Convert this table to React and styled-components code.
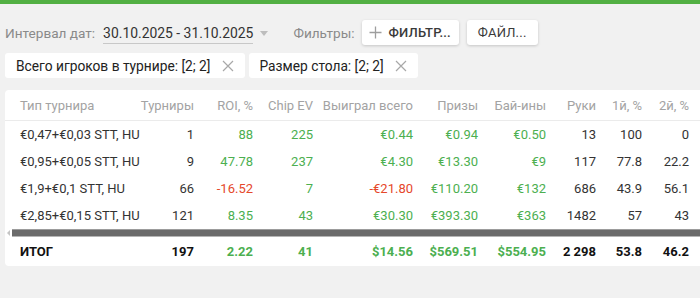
import React from "react";
import styled, { createGlobalStyle } from "styled-components";

const Global = createGlobalStyle`
  html, body { margin: 0; padding: 0; background: #f1f1f1; overflow: hidden; }
  body { font-family: Roboto, "Noto Sans", sans-serif; width: 700px; height: 298px; }
`;

const GREEN = "#4caf50";
const RED = "#e5482b";

const TopBar = styled.div`
  height: 4px;
  background: #52b043;
`;

const Content = styled.div`
  padding: 16px 0 0 5px;
  display: flex;
  flex-direction: column;
`;

const Toolbar = styled.div`
  display: flex;
  align-items: center;
  height: 25px;
`;

const Label = styled.span`
  font-size: 13.6px;
  color: #8a8a8a;
  margin-right: ${(p) => p.$mr || 8}px;
`;

const DateValue = styled.span`
  font-size: 13.9px;
  color: #333;
  border-bottom: 1px solid #c8c8c8;
  line-height: 18px;
  padding-bottom: 1px;
  margin-top: 2px;
`;

const Caret = styled.span`
  width: 0;
  height: 0;
  border-left: 4.5px solid transparent;
  border-right: 4.5px solid transparent;
  border-top: 5px solid #bdbdbd;
  margin: 1px 25px 0 7px;
`;

const Button = styled.button`
  height: 25px;
  display: flex;
  align-items: center;
  gap: 7px;
  padding: 0 ${(p) => (p.$icon ? 8 : 11)}px 0 ${(p) => (p.$icon ? 7 : 11)}px;
  background: #fff;
  border: none;
  border-radius: 3px;
  box-shadow: 0 1px 3px rgba(0, 0, 0, 0.18);
  font-family: Roboto, sans-serif;
  font-size: 13px;
  font-weight: ${(p) => (p.$bold ? 500 : 400)};
  color: #3a3a3a;
  letter-spacing: 0.2px;
  margin-right: 8px;
`;

const Chips = styled.div`
  display: flex;
  gap: 4px;
  margin-top: 8px;
`;

const Chip = styled.div`
  height: 25px;
  display: flex;
  align-items: center;
  gap: 11px;
  padding: 0 11px;
  background: #fff;
  border-radius: 3px;
  font-size: 13.75px;
  color: #222;
`;

const Card = styled.div`
  margin-top: 12px;
  width: 695px;
  overflow: hidden;
  background: #fff;
  border-radius: 4px 0 0 4px;
`;

const COLS = "135px 54px 59px 60px 100px 65px 68px 50px 46px 47px 56px";

const Row = styled.div`
  display: grid;
  grid-template-columns: ${COLS};
  align-items: center;
  height: ${(p) => p.$h || 27}px;
  ${(p) => p.$head && "border-bottom: 1px solid #ebebeb;"}
  font-size: 13px;
  font-weight: ${(p) => (p.$total ? 700 : 400)};
`;

const Cell = styled.div`
  text-align: ${(p) => (p.$left ? "left" : "right")};
  padding-left: ${(p) => (p.$left ? 15 : 0)}px;
  white-space: nowrap;
  color: ${(p) =>
    p.$head ? "#a3a3a3" : p.$c === "g" ? GREEN : p.$c === "r" ? RED : p.$total ? "#111" : "#333"};
`;

const Scroll = styled.div`
  display: flex;
  align-items: center;
  height: 8px;
  padding-left: 2px;
`;

const ScrollArrow = styled.span`
  width: 0;
  height: 0;
  border-top: 3px solid transparent;
  border-bottom: 3px solid transparent;
  border-right: 3px solid #c4c4c4;
  margin-right: 2px;
`;

const ScrollThumb = styled.div`
  flex: 1;
  height: 6px;
  background: #6b6b6b;
  border-top: 1px solid #9c9c9c;
  border-bottom: 1px solid #b5b5b5;
`;

const PlusIcon = () => (
  <svg width="13" height="13" viewBox="0 0 13 13">
    <path d="M6.5 0.5v12M0.5 6.5h12" stroke="#9e9e9e" strokeWidth="1.3" />
  </svg>
);

const CloseIcon = () => (
  <svg width="12" height="12" viewBox="0 0 12 12">
    <path d="M1 1l10 10M11 1L1 11" stroke="#a8a8a8" strokeWidth="1.2" />
  </svg>
);

const headers = ["Тип турнира", "Турниры", "ROI, %", "Chip EV", "Выиграл всего", "Призы", "Бай-ины", "Руки", "1й, %", "2й, %", ""];

const rows = [
  [["€0,47+€0,03 STT, HU"], ["1"], ["88", "g"], ["225", "g"], ["€0.44", "g"], ["€0.94", "g"], ["€0.50", "g"], ["13"], ["100"], ["0"]],
  [["€0,95+€0,05 STT, HU"], ["9"], ["47.78", "g"], ["237", "g"], ["€4.30", "g"], ["€13.30", "g"], ["€9", "g"], ["117"], ["77.8"], ["22.2"]],
  [["€1,9+€0,1 STT, HU"], ["66"], ["-16.52", "r"], ["7", "g"], ["-€21.80", "r"], ["€110.20", "g"], ["€132", "g"], ["686"], ["43.9"], ["56.1"]],
  [["€2,85+€0,15 STT, HU"], ["121"], ["8.35", "g"], ["43", "g"], ["€30.30", "g"], ["€393.30", "g"], ["€363", "g"], ["1482"], ["57"], ["43"]],
];

const total = [["ИТОГ"], ["197"], ["2.22", "g"], ["41", "g"], ["$14.56", "g"], ["$569.51", "g"], ["$554.95", "g"], ["2 298"], ["53.8"], ["46.2"]];

export default function App() {
  return (
    <>
      <Global />
      <TopBar />
      <Content>
        <Toolbar>
          <Label>Интервал дат:</Label>
          <DateValue>30.10.2025 - 31.10.2025</DateValue>
          <Caret />
          <Label $mr={7}>Фильтры:</Label>
          <Button $icon $bold>
            <PlusIcon />
            ФИЛЬТР...
          </Button>
          <Button>ФАЙЛ...</Button>
        </Toolbar>
        <Chips>
          <Chip>
            Всего игроков в турнире: [2; 2]
            <CloseIcon />
          </Chip>
          <Chip>
            Размер стола: [2; 2]
            <CloseIcon />
          </Chip>
        </Chips>
        <Card>
          <Row $head $h={30}>
            {headers.map((h, i) => (
              <Cell key={i} $head $left={i === 0}>
                {h}
              </Cell>
            ))}
          </Row>
          {rows.map((r, ri) => (
            <Row key={ri}>
              {r.map(([v, c], i) => (
                <Cell key={i} $left={i === 0} $c={c}>
                  {v}
                </Cell>
              ))}
            </Row>
          ))}
          <Scroll>
            <ScrollArrow />
            <ScrollThumb />
          </Scroll>
          <Row $total $h={29}>
            {total.map(([v, c], i) => (
              <Cell key={i} $left={i === 0} $c={c} $total>
                {v}
              </Cell>
            ))}
          </Row>
        </Card>
      </Content>
    </>
  );
}
